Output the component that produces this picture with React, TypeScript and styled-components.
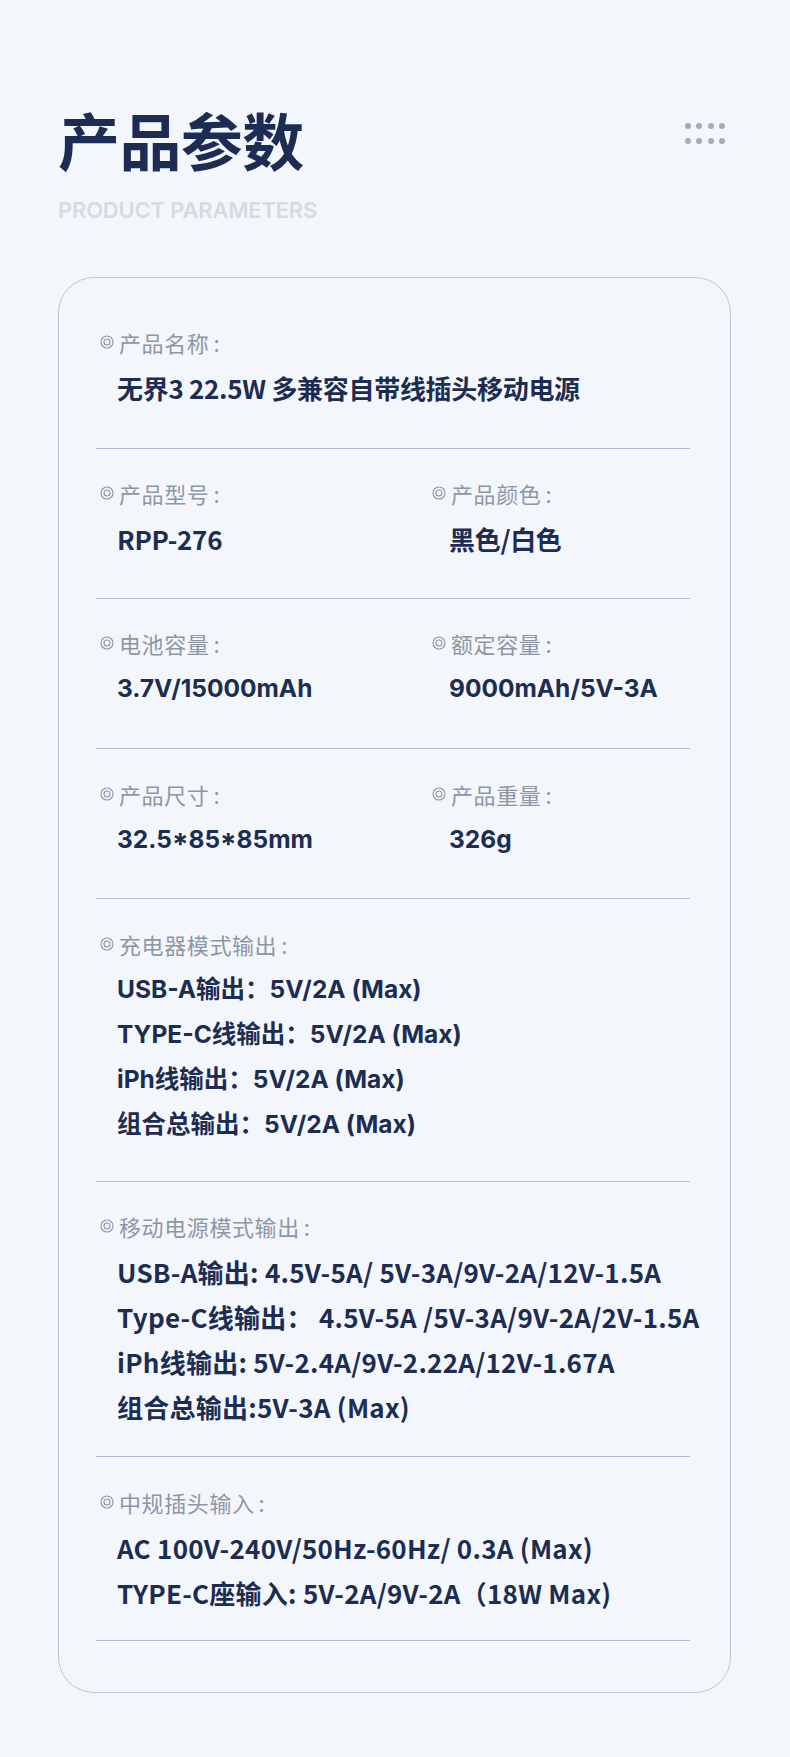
import React from "react";
import styled, { createGlobalStyle } from "styled-components";

const Global = createGlobalStyle`
  html, body { margin: 0; padding: 0; background: #f3f7fc; }
  * { box-sizing: border-box; }
`;

const Page = styled.div`
  background: #f3f7fc;
  min-height: 1757px;
  padding: 104px 59px 60px 58px;
  font-family: "Noto Sans CJK SC", "Noto Sans", sans-serif;
`;

const Header = styled.header`
  display: flex;
  justify-content: space-between;
  align-items: flex-start;
`;

const TitleBlock = styled.div`
  display: flex;
  flex-direction: column;
`;

const Title = styled.h1`
  margin: 0;
  font-size: 62px;
  line-height: 70px;
  font-weight: 700;
  color: #1c2c52;
  letter-spacing: -0.6px;
`;

const Subtitle = styled.div`
  margin-top: 22px;
  font-family: "Inter", "Noto Sans", sans-serif;
  font-size: 22px;
  line-height: 28px;
  font-weight: 600;
  color: #d6dae3;
  letter-spacing: -0.2px;
`;

const Dots = styled.div`
  margin-top: 19px;
  margin-right: 6px;
  display: grid;
  grid-template-columns: repeat(4, 6px);
  column-gap: 5.5px;
  row-gap: 9px;
`;

const Dot = styled.span`
  width: 6px;
  height: 6px;
  border-radius: 50%;
  background: #a3acbd;
`;

const Card = styled.section`
  margin-top: 53px;
  border: 1px solid #bdc7d6;
  border-radius: 36px;
  padding: 0 40px 51px 37px;
`;

const Section = styled.div<{ $top: number; $bottom: number }>`
  padding-top: ${(p) => p.$top}px;
  padding-bottom: ${(p) => p.$bottom}px;
  border-bottom: 1px solid #b3bfd0;
`;

const Pair = styled.div`
  display: grid;
  grid-template-columns: 332px 1fr;
`;

const Field = styled.div`
  display: flex;
  flex-direction: column;
  gap: 9px;
`;

const Label = styled.div`
  display: flex;
  align-items: center;
  gap: 5px;
  padding-left: 4px;
  font-size: 22px;
  line-height: 28px;
  font-weight: 400;
  color: #8e96a6;
  letter-spacing: 0.6px;
`;

const Colon = styled.span`
  margin-left: 4px;
`;

const Values = styled.div`
  display: flex;
  flex-direction: column;
  padding-left: 21px;
`;

type Variant = "wide" | "narrow" | "loose";

const Value = styled.div<{ $variant: Variant }>`
  font-family: ${(p) =>
    p.$variant === "wide"
      ? `"Inter", "Noto Sans CJK SC", sans-serif`
      : `"Noto Sans CJK SC", "Noto Sans", sans-serif`};
  font-size: ${(p) => (p.$variant === "wide" ? 24.5 : 26)}px;
  line-height: 45px;
  font-weight: 700;
  color: #1d2d51;
  white-space: nowrap;
  letter-spacing: ${(p) =>
    p.$variant === "wide" ? "0px" : p.$variant === "loose" ? "0.25px" : "-0.3px"};
`;

const Ring = () => (
  <svg width="14" height="14" viewBox="0 0 14 14" fill="none">
    <circle cx="7" cy="7" r="6" stroke="#8e96a6" strokeWidth="1.1" />
    <circle cx="7" cy="7" r="3" stroke="#8e96a6" strokeWidth="1.1" />
  </svg>
);

type Item = { label: string; values: string[]; variant?: Variant };

const FieldBlock = ({ label, values, variant = "narrow" }: Item) => (
  <Field>
    <Label>
      <Ring />
      <span>
        {label}
        <Colon>:</Colon>
      </span>
    </Label>
    <Values>
      {values.map((v) => (
        <Value key={v} $variant={variant}>
          {v}
        </Value>
      ))}
    </Values>
  </Field>
);

export default function App() {
  return (
    <>
      <Global />
      <Page>
        <Header>
          <TitleBlock>
            <Title>产品参数</Title>
            <Subtitle>PRODUCT PARAMETERS</Subtitle>
          </TitleBlock>
          <Dots>
            {Array.from({ length: 8 }).map((_, i) => (
              <Dot key={i} />
            ))}
          </Dots>
        </Header>
        <Card>
          <Section $top={50} $bottom={38}>
            <FieldBlock label="产品名称" values={["无界3 22.5W 多兼容自带线插头移动电源"]} />
          </Section>
          <Section $top={30} $bottom={37}>
            <Pair>
              <FieldBlock label="产品型号" values={["RPP-276"]} />
              <FieldBlock label="产品颜色" values={["黑色/白色"]} />
            </Pair>
          </Section>
          <Section $top={30} $bottom={37}>
            <Pair>
              <FieldBlock label="电池容量" values={["3.7V/15000mAh"]} variant="wide" />
              <FieldBlock label="额定容量" values={["9000mAh/5V-3A"]} variant="wide" />
            </Pair>
          </Section>
          <Section $top={31} $bottom={36}>
            <Pair>
              <FieldBlock label="产品尺寸" values={["32.5*85*85mm"]} variant="wide" />
              <FieldBlock label="产品重量" values={["326g"]} variant="wide" />
            </Pair>
          </Section>
          <Section $top={31} $bottom={34}>
            <FieldBlock
              label="充电器模式输出"
              variant="wide"
              values={[
                "USB-A输出：5V/2A (Max)",
                "TYPE-C线输出：5V/2A (Max)",
                "iPh线输出：5V/2A (Max)",
                "组合总输出：5V/2A (Max)",
              ]}
            />
          </Section>
          <Section $top={30} $bottom={27}>
            <FieldBlock
              label="移动电源模式输出"
              variant="loose"
              values={[
                "USB-A输出: 4.5V-5A/ 5V-3A/9V-2A/12V-1.5A",
                "Type-C线输出： 4.5V-5A /5V-3A/9V-2A/2V-1.5A",
                "iPh线输出: 5V-2.4A/9V-2.22A/12V-1.67A",
                "组合总输出:5V-3A (Max)",
              ]}
            />
          </Section>
          <Section $top={31} $bottom={25}>
            <FieldBlock
              label="中规插头输入"
              variant="loose"
              values={[
                "AC 100V-240V/50Hz-60Hz/ 0.3A (Max)",
                "TYPE-C座输入: 5V-2A/9V-2A（18W Max)",
              ]}
            />
          </Section>
        </Card>
      </Page>
    </>
  );
}
